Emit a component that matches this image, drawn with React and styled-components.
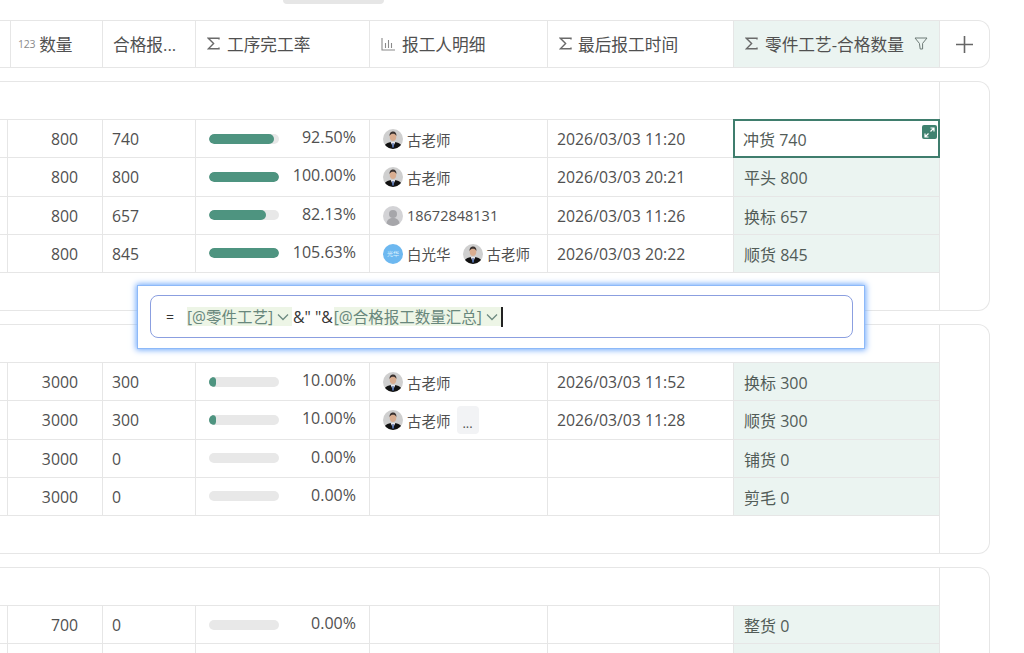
import React from 'react';
import styled, { createGlobalStyle } from 'styled-components';

const GlobalStyle = createGlobalStyle`
  html, body {
    margin: 0;
    height: 100%;
    overflow: hidden;
    background: #fff;
  }
  * {
    box-sizing: border-box;
  }
`;

const COLUMNS = '8px 95px 93px 174px 178px 186px 205px';
const LINE = '#e6e6e6';
const GREEN_BG = '#ebf4f1';

const Page = styled.div`
  position: relative;
  width: 1024px;
  height: 653px;
  overflow: hidden;
  font-family: 'Open Sans', 'Noto Sans CJK SC', sans-serif;
  font-size: 15.8px;
  color: #505050;
`;

const TopTab = styled.div`
  width: 101px;
  height: 4px;
  margin: 0 0 16px 283px;
  background: #e6e6e6;
  border-radius: 0 0 8px 8px;
`;

const Board = styled.div`
  display: flex;
  flex-direction: column;
  gap: 13px;
  width: 990px;
`;

const HeaderBar = styled.div`
  display: flex;
  height: 48px;
  border: 1px solid ${LINE};
  border-left: none;
  border-radius: 0 12px 12px 0;
`;

const Columns = styled.div`
  display: grid;
  grid-template-columns: ${COLUMNS};
  width: 939px;
`;

const HeadCell = styled.div`
  display: flex;
  align-items: center;
  gap: ${(p) => p.$gap || 7}px;
  min-width: 0;
  padding: 0 0 1px ${(p) => p.$pad || 10}px;
  font-size: 16.7px;
  color: #505050;
  white-space: nowrap;
  border-right: 1px solid ${LINE};
  background: ${(p) => (p.$green ? GREEN_BG : 'transparent')};

  &:last-child {
    border-right: none;
  }
`;

const NumberTag = styled.span`
  font-size: 10.5px;
  color: #8a8a8a;
  letter-spacing: -0.3px;
`;

const FilterSlot = styled.span`
  display: flex;
  margin-left: auto;
  margin-right: 11px;
`;

const AddColumn = styled.div`
  flex: 1;
  display: flex;
  align-items: center;
  justify-content: center;
  border-left: 1px solid ${LINE};
`;

const Group = styled.section`
  display: flex;
  border: 1px solid ${LINE};
  border-left: none;
  border-radius: 0 12px 12px 0;
  background: #fff;
`;

const GroupBody = styled.div`
  width: 939px;
  padding: 37px 0;
`;

const GroupSide = styled.div`
  flex: 1;
  border-left: 1px solid ${LINE};
`;

const Row = styled(Columns)`
  height: 38.25px;
  border-top: 1px solid ${LINE};

  &:last-child {
    height: 39.25px;
    border-bottom: 1px solid ${LINE};
  }
`;

const Cell = styled.div`
  position: relative;
  display: flex;
  align-items: center;
  justify-content: ${(p) => (p.$right ? 'flex-end' : 'flex-start')};
  min-width: 0;
  padding: 1px ${(p) => (p.$right ? 24 : 0)}px 0 ${(p) => p.$pad ?? 9}px;
  white-space: nowrap;
  border-right: 1px solid ${LINE};
`;

const ResultCell = styled(Cell)`
  z-index: ${(p) => (p.$selected ? 1 : 0)};
  padding-left: 10px;
  border-right: none;
  font-size: 16px;
  color: #525c58;
  background: ${(p) => (p.$selected ? '#fff' : GREEN_BG)};
  box-shadow: ${(p) => (p.$selected ? '0 0 0 2px #3f7d6d inset' : 'none')};
  margin: ${(p) => (p.$selected ? '-1px -1px -1px -1px' : '0')};
`;

const ExpandBadge = styled.span`
  position: absolute;
  top: 6px;
  right: 3px;
  display: flex;
  align-items: center;
  justify-content: center;
  width: 15px;
  height: 14px;
  border-radius: 2px;
  background: #3f8270;
`;

const ProgressCell = styled(Cell)`
  justify-content: space-between;
  padding: 0 13px 0 13px;
`;

const Track = styled.div`
  width: 70px;
  height: 10px;
  border-radius: 5px;
  background: #e8e8e8;
  overflow: hidden;
`;

const Fill = styled.div`
  height: 100%;
  border-radius: 5px;
  background: #4e9480;
`;

const Percent = styled.span`
  padding-bottom: 3px;
  font-size: 16px;
`;

const PeopleCell = styled(Cell)`
  gap: 12px;
  padding-left: 13px;
`;

const Person = styled.span`
  display: flex;
  align-items: center;
  gap: 4px;
  font-size: 14.5px;
`;

const MoreChip = styled.span`
  display: flex;
  align-items: center;
  justify-content: center;
  width: 22px;
  height: 28px;
  margin-left: -6px;
  padding-top: 6px;
  border-radius: 4px;
  background: #f2f3f5;
  font-size: 13px;
`;

const Popover = styled.div`
  position: absolute;
  left: 137px;
  top: 285px;
  width: 728px;
  height: 64px;
  padding: 9px 11px 11px 12px;
  background: #fff;
  border: 1px solid #8db9f8;
  box-shadow: 0 0 6px 1px #6fa8fb;
`;

const FormulaInput = styled.div`
  display: flex;
  align-items: center;
  height: 43px;
  padding-left: 15px;
  border: 1px solid #8b9fe0;
  border-radius: 8px;
  color: #333;
`;

const Equals = styled.span`
  width: 21px;
  font-size: 14px;
`;

const Token = styled.span`
  display: flex;
  align-items: center;
  gap: 4px;
  height: 19px;
  padding-right: 3px;
  background: #edf5e6;
  color: #68877c;
  font-size: 15.5px;
`;

const Literal = styled.span`
  padding: 0 1px;
  white-space: pre;
`;

const Caret = styled.span`
  width: 2px;
  height: 20px;
  background: #222;
`;

function Sigma() {
  return (
    <svg width="13" height="13" viewBox="0 0 13 13" fill="none" stroke="#6a6a6a" strokeWidth="1.4">
      <path d="M12 2.5V1.3H1.4L6.6 6.4 1.4 11.7H12v-1.2" />
    </svg>
  );
}

function BarsIcon() {
  return (
    <svg width="15" height="14" viewBox="0 0 15 14" fill="none" stroke="#8a8a8a" strokeWidth="1.1">
      <path d="M1 1v12h13M4.500 6v5M7.500 3v8M10.500 6v5" />
    </svg>
  );
}

function FunnelIcon() {
  return (
    <svg width="14" height="13" viewBox="0 0 14 13" fill="none" stroke="#6d7a76" strokeWidth="1">
      <path d="M1 1h12L8.600 6.400V12H6.200L5.400 6.400z" />
    </svg>
  );
}

function PlusIcon() {
  return (
    <svg width="19" height="19" viewBox="0 0 19 19" stroke="#666" strokeWidth="1.6">
      <path d="M9.500 1v17M1 9.500h17" />
    </svg>
  );
}

function ExpandIcon() {
  return (
    <svg width="11" height="11" viewBox="0 0 11 11" fill="none" stroke="#fff" strokeWidth="1.2">
      <path d="M6.500 1h3.500v3.500M10 1 6.500 4.500M4.500 10H1V6.500M1 10l3.500-3.500" />
    </svg>
  );
}

function Chevron() {
  return (
    <svg width="12" height="8" viewBox="0 0 12 8" fill="none" stroke="#6d8a80" strokeWidth="1.3">
      <path d="M1 1.500 6 6.500l5-5" />
    </svg>
  );
}

function TeacherAvatar() {
  return (
    <svg width="20" height="20" viewBox="0 0 20 20">
      <clipPath id="avatarClip">
        <circle cx="10" cy="10" r="10" />
      </clipPath>
      <g clipPath="url(#avatarClip)">
        <rect width="20" height="20" fill="#cfcfcf" />
        <path d="M1 20c0-5 3-7 9-7s9 2 9 7z" fill="#111" />
        <path d="M7.600 13 10 18l2.400-5z" fill="#e8e8ee" />
        <path d="M9.400 14h1.200l.4 4.500H9z" fill="#4c6aa8" />
        <ellipse cx="10" cy="7.600" rx="3.300" ry="4.400" fill="#d9ad90" />
        <path d="M6.600 7c-.3-3.400 1.600-4.600 3.600-4.600S13.700 4 13.400 7c-.8-1.800-2-2.300-3.400-2.300S7.300 5.300 6.600 7z" fill="#3a3230" />
      </g>
    </svg>
  );
}

function GreyAvatar() {
  return (
    <svg width="20" height="20" viewBox="0 0 20 20">
      <circle cx="10" cy="10" r="10" fill="#d3d3d6" />
      <circle cx="10" cy="8" r="4" fill="#a6a6aa" />
      <path d="M3.500 17.500c.6-4 3-5.500 6.500-5.500s5.900 1.500 6.500 5.500A10 10 0 0 1 3.500 17.500z" fill="#a6a6aa" />
    </svg>
  );
}

const BlueBubble = styled.span`
  display: flex;
  align-items: center;
  justify-content: center;
  width: 20px;
  height: 20px;
  border-radius: 50%;
  background: #6db8f0;
  color: #dff1ff;
  font-size: 6px;
`;

const avatars = {
  teacher: <TeacherAvatar />,
  grey: <GreyAvatar />,
  blue: <BlueBubble>光华</BlueBubble>,
};

const groups = [
  [
    { qty: 800, ok: 740, rate: 92.5, people: [['teacher', '古老师']], time: '2026/03/03 11:20', result: '冲货 740', selected: true },
    { qty: 800, ok: 800, rate: 100, people: [['teacher', '古老师']], time: '2026/03/03 20:21', result: '平头 800' },
    { qty: 800, ok: 657, rate: 82.13, people: [['grey', '18672848131']], time: '2026/03/03 11:26', result: '换标 657' },
    { qty: 800, ok: 845, rate: 105.63, people: [['blue', '白光华'], ['teacher', '古老师']], time: '2026/03/03 20:22', result: '顺货 845' },
  ],
  [
    { qty: 3000, ok: 300, rate: 10, people: [['teacher', '古老师']], time: '2026/03/03 11:52', result: '换标 300' },
    { qty: 3000, ok: 300, rate: 10, people: [['teacher', '古老师']], more: true, time: '2026/03/03 11:28', result: '顺货 300' },
    { qty: 3000, ok: 0, rate: 0, people: [], time: '', result: '铺货 0' },
    { qty: 3000, ok: 0, rate: 0, people: [], time: '', result: '剪毛 0' },
  ],
  [
    { qty: 700, ok: 0, rate: 0, people: [], time: '', result: '整货 0' },
    { people: [], time: '', result: '' },
  ],
];

function DataRow({ row }) {
  const hasRate = row.rate !== undefined;
  return (
    <Row>
      <Cell $pad={0} />
      <Cell $right>{row.qty}</Cell>
      <Cell>{row.ok}</Cell>
      {hasRate ? (
        <ProgressCell>
          <Track>
            <Fill style={{ width: `${Math.min(row.rate, 100)}%` }} />
          </Track>
          <Percent>{row.rate.toFixed(2)}%</Percent>
        </ProgressCell>
      ) : (
        <Cell />
      )}
      <PeopleCell>
        {row.people.map(([avatar, name]) => (
          <Person key={name}>
            {avatars[avatar]}
            {name}
          </Person>
        ))}
        {row.more && <MoreChip>...</MoreChip>}
      </PeopleCell>
      <Cell>{row.time}</Cell>
      <ResultCell $selected={row.selected}>
        {row.result}
        {row.selected && (
          <ExpandBadge>
            <ExpandIcon />
          </ExpandBadge>
        )}
      </ResultCell>
    </Row>
  );
}

export default function App() {
  return (
    <Page>
      <GlobalStyle />
      <TopTab />
      <Board>
        <HeaderBar>
          <Columns>
            <HeadCell />
            <HeadCell $gap={4} $pad={10}>
              <NumberTag>123</NumberTag>
              数量
            </HeadCell>
            <HeadCell>合格报...</HeadCell>
            <HeadCell $pad={11} $gap={7}>
              <Sigma />
              工序完工率
            </HeadCell>
            <HeadCell $pad={11} $gap={6}>
              <BarsIcon />
              报工人明细
            </HeadCell>
            <HeadCell $pad={11} $gap={6}>
              <Sigma />
              最后报工时间
            </HeadCell>
            <HeadCell $green $pad={11} $gap={7}>
              <Sigma />
              零件工艺-合格数量
              <FilterSlot>
                <FunnelIcon />
              </FilterSlot>
            </HeadCell>
          </Columns>
          <AddColumn>
            <PlusIcon />
          </AddColumn>
        </HeaderBar>
        {groups.map((rows, index) => (
          <Group key={index}>
            <GroupBody>
              {rows.map((row, rowIndex) => (
                <DataRow key={rowIndex} row={row} />
              ))}
            </GroupBody>
            <GroupSide />
          </Group>
        ))}
      </Board>
      <Popover>
        <FormulaInput>
          <Equals>=</Equals>
          <Token>
            [@零件工艺]
            <Chevron />
          </Token>
          <Literal>&amp;" "&amp;</Literal>
          <Token>
            [@合格报工数量汇总]
            <Chevron />
          </Token>
          <Caret />
        </FormulaInput>
      </Popover>
    </Page>
  );
}
